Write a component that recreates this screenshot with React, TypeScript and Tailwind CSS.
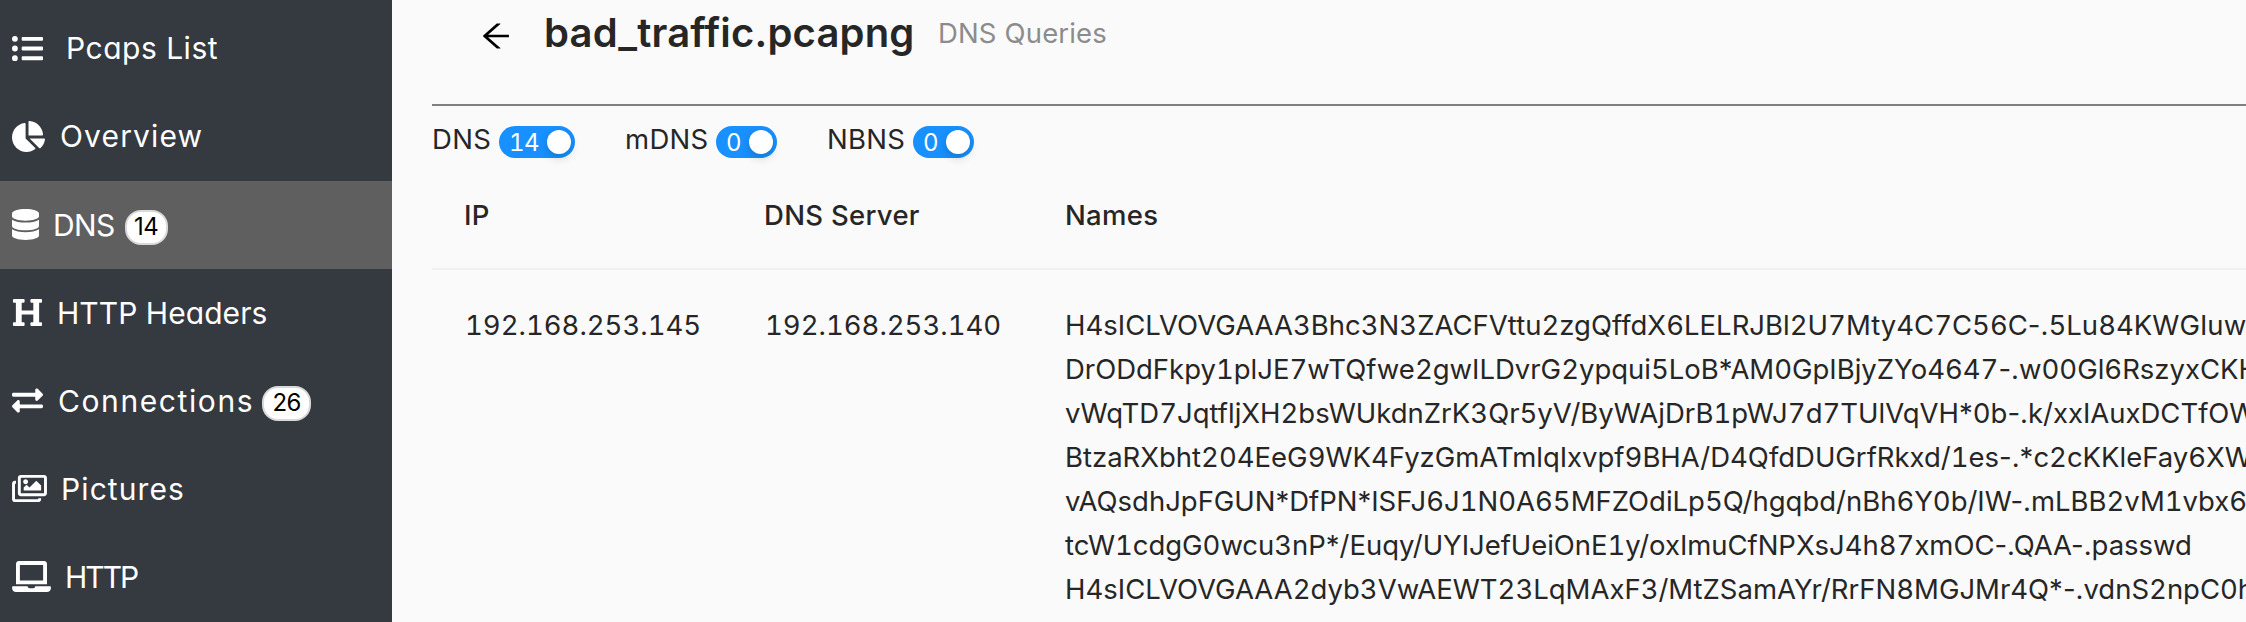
import { Fragment } from "react";
import type { ReactNode } from "react";
import { FaListUl, FaChartPie, FaDatabase, FaHeading, FaExchangeAlt, FaRegImages, FaLaptop } from "react-icons/fa";
import { AiOutlineArrowLeft } from "react-icons/ai";

type Item = { icon: ReactNode; label: string; gap: string; tracking: string; count?: number; badge?: string; active?: boolean };

const items: Item[] = [
  { icon: <FaListUl className="h-[31px] w-[31px]" />, label: "Pcaps List", gap: "ml-[23px] -mt-0.5", tracking: "tracking-[0.5px]" },
  { icon: <FaChartPie className="h-[31px] w-[33px]" />, label: "Overview", gap: "ml-[15px] -mt-0.5", tracking: "tracking-[1.15px]" },
  { icon: <FaDatabase className="h-[31px] w-[27px]" />, label: "DNS", gap: "ml-[14px]", tracking: "tracking-[-0.6px]", count: 14, badge: "w-[43px] ml-[10px]", active: true },
  { icon: <FaHeading className="h-[31px] w-[31px]" />, label: "HTTP Headers", gap: "ml-[14px]", tracking: "tracking-[0.05px]" },
  { icon: <FaExchangeAlt className="h-[31px] w-[31px]" />, label: "Connections", gap: "ml-[15px]", tracking: "tracking-[1.6px]", count: 26, badge: "w-[49px] ml-[8px]" },
  { icon: <FaRegImages className="h-[31px] w-[35px]" />, label: "Pictures", gap: "ml-[14px]", tracking: "tracking-[1.1px]" },
  { icon: <FaLaptop className="h-[31px] w-[39px]" />, label: "HTTP", gap: "ml-[14px]", tracking: "tracking-[-2px]" },
];

const names = [
  { text: "H4sICLVOVGAAA3Bhc3N3ZACFVttu2zgQffdX6LELRJBl2U7Mty4C7C56C-.5Lu84KWGIuw", tracking: "tracking-[0.01px]" },
  { text: "DrODdFkpy1plJE7wTQfwe2gwILDvrG2ypqui5LoB*AM0GpIBjyZYo4647-.w00Gl6RszyxCKH", tracking: "tracking-[-0.01px]" },
  { text: "vWqTD7JqtfljXH2bsWUkdnZrK3Qr5yV/ByWAjDrB1pWJ7d7TUlVqVH*0b-.k/xxIAuxDCTfOW", tracking: "tracking-[-0.01px]" },
  { text: "BtzaRXbht204EeG9WK4FyzGmATmlqIxvpf9BHA/D4QfdDUGrfRkxd/1es-.*c2cKKleFay6XW", tracking: "tracking-[-0.01px]" },
  { text: "vAQsdhJpFGUN*DfPN*ISFJ6J1N0A65MFZOdiLp5Q/hgqbd/nBh6Y0b/IW-.mLBB2vM1vbx6", tracking: "tracking-[-0.02px]" },
  { text: "tcW1cdgG0wcu3nP*/Euqy/UYIJefUeiOnE1y/oxImuCfNPXsJ4h87xmOC-.QAA-.passwd", tracking: "tracking-[-0.04px]" },
  { text: "H4sICLVOVGAAA2dyb3VwAEWT23LqMAxF3/MtZSamAYr/RrFN8MGJMr4Q*-.vdnS2npC0h", tracking: "tracking-[-0.01px]" },
];

// Digits keep a fixed width while letters and punctuation stay proportional.
function TabularDigits({ text }: { text: string }) {
  return text.split(/(\d+)/).map((part, i) =>
    i % 2 ? (
      <span key={i} className="tabular-nums">{part}</span>
    ) : (
      <Fragment key={i}>{part}</Fragment>
    ),
  );
}

function Toggle({ label, count, size }: { label: string; count: number; size: string }) {
  return (
    <div className={`flex h-11 shrink-0 items-center justify-between ${size}`}>
      <span className="mt-[3px] text-[27.5px] tracking-[0.3px]">{label}</span>
      <span
        className={`mt-2 flex h-8 items-center justify-between rounded-full bg-[#1890ff] pr-1 pl-[10px] text-[24px] leading-8 text-white ${
          count > 9 ? "w-[76px]" : "w-[61px]"
        }`}
      >
        <span className="pt-px tracking-[-0.5px] tabular-nums">{count}</span>
        <span className="size-6 rounded-full bg-white shadow-[0_4px_8px_rgba(0,35,11,0.2)]" />
      </span>
    </div>
  );
}

export default function App() {
  return (
    <div className="flex h-[622px] w-[2246px] overflow-hidden bg-[#fafafa] font-['Inter',sans-serif] text-[#262626]">
      <nav className="w-[392px] shrink-0 bg-[#353940] pt-[5px] text-white">
        {items.map((it) => (
          <div key={it.label} className={`flex h-22 items-center pl-3 ${it.active ? "bg-[#5f5f5f]" : ""}`}>
            <span className="-mt-px shrink-0">{it.icon}</span>
            <span className={`text-[30px] whitespace-nowrap [font-feature-settings:'cv11'] ${it.gap} ${it.tracking}`}>{it.label}</span>
            {it.count !== undefined && (
              <span className={`mt-1 flex h-[35px] items-center justify-center rounded-[16px] border-2 border-[#d9d9d9] bg-white text-[24px] tracking-[-0.5px] text-black ${it.badge}`}>
                {it.count}
              </span>
            )}
          </div>
        ))}
      </nav>
      <main className="ml-10 w-[1814px] shrink-0 overflow-hidden whitespace-nowrap">
        <header className="flex h-[106px] items-start border-b-2 border-[#808080]">
          <AiOutlineArrowLeft className="mt-[18px] ml-[46px] size-9 text-black" />
          <h1 className="mt-[3px] ml-[30px] w-[394px] text-[40px] leading-[60px] font-semibold tracking-[0.17px]">bad_traffic.pcapng</h1>
          <span className="mt-[11px] text-[27.5px] leading-[44px] tracking-[0.15px] text-[#8c8c8c]">DNS Queries</span>
        </header>
        <div className="mt-[10px] flex">
          <Toggle label="DNS" count={14} size="w-[143px] mr-[50px]" />
          <Toggle label="mDNS" count={0} size="w-[152px] mr-[50px]" />
          <Toggle label="NBNS" count={0} size="w-[147px]" />
        </div>
        <div className="mt-0.5 grid h-[108px] grid-cols-[300px_301px_1fr] items-center border-b-2 border-[#f0f0f0] pt-0.5 pl-8 text-[27.5px] font-medium tracking-[0.3px]">
          <span>IP</span>
          <span>DNS Server</span>
          <span>Names</span>
        </div>
        <div className="grid grid-cols-[300px_301px_1fr] pt-[33px] pl-8 text-[27.5px] leading-[44px]">
          <span className="pl-px tabular-nums">192.168.253.145</span>
          <span className="pl-px tabular-nums">192.168.253.140</span>
          <div>
            {names.map((n) => (
              <p key={n.text} className={n.tracking}>
                <TabularDigits text={n.text} />
              </p>
            ))}
          </div>
        </div>
      </main>
    </div>
  );
}
